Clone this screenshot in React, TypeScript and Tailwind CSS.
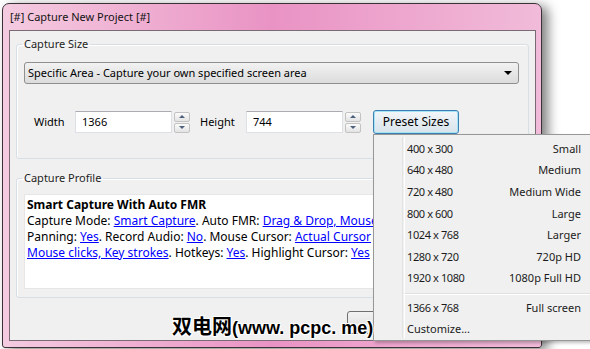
const presets = [
  { size: "400 x 300", name: "Small" },
  { size: "640 x 480", name: "Medium" },
  { size: "720 x 480", name: "Medium Wide" },
  { size: "800 x 600", name: "Large" },
  { size: "1024 x 768", name: "Larger" },
  { size: "1280 x 720", name: "720p HD" },
  { size: "1920 x 1080", name: "1080p Full HD" },
];

function Link({ children }: { children: React.ReactNode }) {
  return <span className="text-[#0000ff] underline">{children}</span>;
}

function Spinner() {
  return (
    <div className="ml-[2px] flex w-[16px] flex-col gap-[1px]">
      <div className="flex h-[10px] items-center justify-center rounded-[2px] border border-[#c3c3c3] bg-gradient-to-b from-[#fbfbfb] to-[#e3e3e3]">
        <div className="h-0 w-0 border-x-[3px] border-b-[3px] border-x-transparent border-b-[#4c607e]" />
      </div>
      <div className="flex h-[10px] items-center justify-center rounded-[2px] border border-[#c3c3c3] bg-gradient-to-b from-[#fbfbfb] to-[#e3e3e3]">
        <div className="h-0 w-0 border-x-[3px] border-t-[3px] border-x-transparent border-t-[#4c607e]" />
      </div>
    </div>
  );
}

function TextBox({ value }: { value: string }) {
  return (
    <div className="flex h-[22px] w-[97px] items-center border border-[#dde1e6] border-t-[#abadb3] bg-white pl-[6px] text-[11px]">
      {value}
    </div>
  );
}

function PresetMenu() {
  return (
    <div className="absolute left-[373px] top-[134px] flex h-[207px] w-[226px] flex-col border border-[#979797] bg-[#f0f0f0] pt-[3px] text-[11px] shadow-[2px_2px_3px_rgba(0,0,0,0.25)]">
      {/* icon gutter */}
      <div className="absolute bottom-[2px] left-[28px] top-[2px] w-[2px] border-l border-[#e2e3e3] shadow-[1px_0_0_#ffffff]" />
      {presets.map((p) => (
        <div key={p.size} className="flex h-[21.7px] items-center justify-between pl-[33px] pr-[17px] text-[#1b1b1b]">
          <span className="tracking-[-0.4px]">{p.size}</span>
          <span>{p.name}</span>
        </div>
      ))}
      <div className="ml-[29px] mr-[2px] py-[3.5px]">
        <div className="h-[1px] bg-[#e0e0e0] shadow-[0_1px_0_#ffffff]" />
      </div>
      <div className="flex h-[21.5px] items-center justify-between pl-[33px] pr-[17px] text-[#1b1b1b]">
        <span className="tracking-[-0.4px]">1366 x 768</span>
        <span>Full screen</span>
      </div>
      <div className="flex h-[21.5px] items-center pl-[33px] text-[#1b1b1b]">Customize...</div>
    </div>
  );
}

export default function App() {
  return (
    <div className="relative h-[349px] w-[590px] overflow-hidden bg-white font-['Noto_Sans',sans-serif] text-[11px] leading-[16px] text-black">
      {/* window */}
      <div className="ml-[2px] mt-[3px] flex h-[345px] w-[540px] flex-col rounded-b-[3px] rounded-t-[7px] border border-[#3a3236] bg-gradient-to-r from-[#f4cbe0] via-[#e993c4] to-[#f1bbd9] shadow-[6px_3px_12px_rgba(0,0,0,0.5)]">
        <div className="flex h-[26px] items-center pl-[7px] text-[#141414]">[#] Capture New Project [#]</div>

        <div className="ml-[6px] mr-[5px] flex h-[311px] flex-col border border-[#7a6a74] bg-[#f0f0f0]">
          {/* Capture Size */}
          <fieldset className="mx-[6px] mt-[5px] rounded-[3px] border border-[#d5dfe5] px-[5px] pb-[25px] shadow-[inset_1px_1px_0_#ffffff]">
            <legend className="px-[2px] text-[#1e1e1e]">Capture Size</legend>
            <div className="ml-[2px] mt-[10px] flex h-[22px] w-[495px] items-center justify-between rounded-[3px] border border-[#8e8f8f] bg-gradient-to-b from-[#f2f2f2] to-[#dcdcdc] pl-[3px] pr-[6px]">
              <span>Specific Area - Capture your own specified screen area</span>
              <div className="h-0 w-0 border-x-[4px] border-t-[4px] border-x-transparent border-t-black" />
            </div>
            <div className="mt-[27px] flex h-[22px] items-center">
              <span className="ml-[12px] w-[41px]">Width</span>
              <TextBox value="1366" />
              <Spinner />
              <span className="ml-[10px] w-[46px]">Height</span>
              <TextBox value="744" />
              <Spinner />
              <div className="ml-[12px] flex h-[24px] w-[86px] items-center justify-center rounded-[3px] border border-[#3c7fb1] bg-gradient-to-b from-[#f2f6f9] to-[#d8e3ea] text-[12px] shadow-[inset_0_0_0_1px_#a8e4f8]">
                Preset Sizes
              </div>
            </div>
          </fieldset>

          {/* Capture Profile */}
          <fieldset className="mx-[6px] mt-[11px] rounded-[3px] border border-[#d5dfe5] px-[5px] pb-[8px] shadow-[inset_1px_1px_0_#ffffff]">
            <legend className="px-[2px] text-[#1e1e1e]">Capture Profile</legend>
            <div className="ml-[2px] mt-[8px] h-[95px] w-[495px] overflow-hidden whitespace-nowrap border border-[#e6e6e6] bg-white pl-[2px] pt-[2px] text-[12px]">
              <div className="font-bold">Smart Capture With Auto FMR</div>
              <div>
                Capture Mode: <Link>Smart Capture</Link>. Auto FMR: <Link>Drag &amp; Drop, Mouse</Link>
              </div>
              <div>
                Panning: <Link>Yes</Link>. Record Audio: <Link>No</Link>. Mouse Cursor: <Link>Actual Cursor</Link>
              </div>
              <div>
                <Link>Mouse clicks, Key strokes</Link>. Hotkeys: <Link>Yes</Link>. Highlight Cursor: <Link>Yes</Link>
              </div>
            </div>
          </fieldset>

          <div className="ml-[337px] mt-[13px] flex">
            <div className="flex h-[23px] w-[75px] items-center justify-center rounded-[3px] border border-[#707070] bg-gradient-to-b from-[#f2f2f2] to-[#dddddd]">
              OK
            </div>
          </div>
        </div>
      </div>

      <PresetMenu />

      {/* watermark */}
      <div className="absolute left-[172px] top-[313px] flex items-baseline whitespace-nowrap font-bold leading-[26px] text-black [text-shadow:1px_1px_0_#fff,-1px_-1px_0_#fff,1px_-1px_0_#fff,-1px_1px_0_#fff]">
        <span className="font-['Noto_Sans_CJK_SC',sans-serif] text-[20px]">双电网</span>
        <span className="font-['Liberation_Sans',sans-serif] text-[18px]">(www. pcpc. me)</span>
      </div>
    </div>
  );
}
